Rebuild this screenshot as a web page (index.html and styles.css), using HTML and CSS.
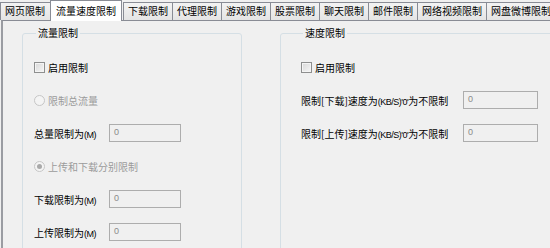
FILE: index.html
```html
<!DOCTYPE html>
<html lang="zh-CN">
<head>
  <meta charset="UTF-8" />
  <title>流量速度限制</title>
  <link rel="stylesheet" href="styles.css">
</head>
<body>
  <div class="tabs">
    <div class="tab">网页限制</div>
    <div class="tab active">流量速度限制</div>
    <div class="tab">下载限制</div>
    <div class="tab">代理限制</div>
    <div class="tab">游戏限制</div>
    <div class="tab">股票限制</div>
    <div class="tab">聊天限制</div>
    <div class="tab">邮件限制</div>
    <div class="tab">网络视频限制</div>
    <div class="tab">网盘微博限制</div>
    <div class="tab">自定义</div>
  </div>

  <div class="panel">
    <!-- 流量限制 -->
    <fieldset class="group group-left">
      <legend>流量限制</legend>
      <div class="rows">
        <div class="row">
          <span class="check"></span>
          <span>启用限制</span>
        </div>
        <div class="row off">
          <span class="radio"></span>
          <span>限制总流量</span>
        </div>
        <div class="row">
          <span class="label">总量限制为<small>(M)</small></span>
          <div class="field">0</div>
        </div>
        <div class="row off">
          <span class="radio on"></span>
          <span>上传和下载分别限制</span>
        </div>
        <div class="row">
          <span class="label">下载限制为<small>(M)</small></span>
          <div class="field">0</div>
        </div>
        <div class="row">
          <span class="label">上传限制为<small>(M)</small></span>
          <div class="field">0</div>
        </div>
      </div>
    </fieldset>

    <!-- 速度限制 -->
    <fieldset class="group group-right">
      <legend>速度限制</legend>
      <div class="rows">
        <div class="row">
          <span class="check"></span>
          <span>启用限制</span>
        </div>
        <div class="row">
          <span class="label wide">限制[下载]速度为<small>(KB/S)'0'</small>为不限制</span>
          <div class="field wide">0</div>
        </div>
        <div class="row">
          <span class="label wide">限制[上传]速度为<small>(KB/S)'0'</small>为不限制</span>
          <div class="field wide">0</div>
        </div>
      </div>
    </fieldset>
  </div>
</body>
</html>
```

FILE: styles.css
```css
body {
  margin: 0;
  width: 550px;
  height: 248px;
  overflow: hidden;
  background: #f0f0f0;
  font-family: "Noto Sans CJK SC", "Liberation Sans", sans-serif;
  font-size: 10px;
  color: #000;
}

.tabs {
  display: flex;
  height: 21px;
  position: relative;
  z-index: 2;
  white-space: nowrap;
  overflow: hidden;
}

.tab {
  flex: none;
  box-sizing: border-box;
  height: 18px;
  margin-top: 2px;
  margin-right: -1px;
  padding: 0 4px;
  line-height: 16px;
  border: 1px solid #898c95;
  border-bottom: none;
  background: linear-gradient(to bottom, #f3f3f3, #e4e4e4);
}

.tab:first-child {
  padding-right: 5px;
}

.tab.active {
  height: 22px;
  margin-top: 0;
  margin-right: 1px;
  padding: 0 5px;
  line-height: 19px;
  background: #fff;
  position: relative;
  z-index: 3;
}

.panel {
  display: flex;
  box-sizing: border-box;
  height: 228px;
  margin-top: -1px;
  margin-left: 1px;
  border-top: 1px solid #898c95;
  border-left: 2px solid #9a9ca2;
  padding-top: 6px;
  overflow: hidden;
}

.group {
  flex: none;
  box-sizing: border-box;
  margin: 0;
  padding: 0 0 0 11px;
  border: 1px solid #d5dfe5;
  border-radius: 3px;
  height: 240px;
}

.group legend {
  margin-left: 2px;
  padding: 0 2px;
  line-height: 12px;
}

.group-left {
  width: 220px;
  margin-left: 19px;
}

.group-right {
  width: 300px;
  margin-left: 38px;
  padding-left: 20px;
}

.rows {
  display: flex;
  flex-direction: column;
  gap: 15px;
  padding-top: 19px;
}

.row {
  display: flex;
  align-items: center;
  height: 18px;
  gap: 3px;
}

.row.off {
  color: #9b9b9b;
}

.check {
  width: 9px;
  height: 9px;
  border: 1px solid #8e8f8f;
  background: linear-gradient(135deg, #d8d8d8, #f6f6f6);
  box-shadow: inset 0 0 0 1px #f4f4f4;
}

.radio {
  box-sizing: border-box;
  width: 11px;
  height: 11px;
  border: 1px solid #c6c6c6;
  border-radius: 50%;
  background: #f4f4f4;
  position: relative;
}

.radio.on::after {
  content: "";
  position: absolute;
  left: 2px;
  top: 2px;
  width: 5px;
  height: 5px;
  border-radius: 50%;
  background: #a9a9a9;
}

.label {
  width: 72px;
}

.label.wide {
  width: 159px;
}

small {
  font-family: "Liberation Sans", sans-serif;
  font-size: 9px;
  letter-spacing: -0.5px;
}

.field {
  box-sizing: border-box;
  width: 72px;
  height: 18px;
  padding: 1px 4px;
  border: 1px solid #adadad;
  background: #f0f0f0;
  color: #8a8a8a;
  font-family: "Liberation Sans", sans-serif;
  font-size: 9px;
  line-height: 12px;
}

.field.wide {
  width: 75px;
}
```
